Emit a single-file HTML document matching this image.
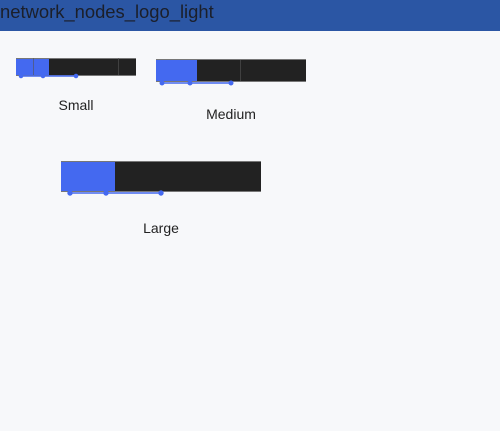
<!DOCTYPE html><html><head><style>
body{margin:0;width:500px;height:431px;background:#f7f8fa;font-family:"Liberation Sans",sans-serif;position:relative;overflow:hidden}
.h{position:absolute;left:0;top:0;width:500px;height:31px;background:#2b56a4}
.h span{position:absolute;left:0;top:1px;font-size:18.4px;color:#1b1f2a}
.b{position:absolute;background:#222;border-top:1px solid #777;border-bottom:1px solid #777;box-sizing:border-box}
.bl{position:absolute;left:0;top:0;bottom:0;background:#4469f0}
.l{position:absolute;font-size:14px;color:#222;transform:translateX(-50%)}
svg{position:absolute;left:0;top:0}
</style></head><body>
<div class="h"><span>network_nodes_logo_light</span></div>
<div class="b" style="left:16px;top:58px;width:120px;height:18px"><div class="bl" style="width:33px"></div></div>
<div class="b" style="left:156px;top:59px;width:150px;height:23px"><div class="bl" style="width:41px"></div></div>
<div class="b" style="left:61px;top:161px;width:200px;height:31px"><div class="bl" style="width:54px"></div></div>
<svg width="500" height="431" fill="#4469f0" stroke="#4469f0">
<g stroke="#555" stroke-width="1" opacity="0.6"><line x1="33.5" y1="58" x2="33.5" y2="75"/><line x1="118.5" y1="58" x2="118.5" y2="75"/><line x1="240.5" y1="60" x2="240.5" y2="81"/></g>
<line x1="21" y1="76" x2="76" y2="76" stroke-width="1.5"/><circle cx="21" cy="76" r="1.8"/><circle cx="43" cy="76" r="1.8"/><circle cx="76" cy="76" r="1.8"/>
<line x1="162" y1="83" x2="231" y2="83" stroke-width="1.5"/><circle cx="162" cy="83" r="2"/><circle cx="190" cy="83" r="2"/><circle cx="231" cy="83" r="2"/>
<line x1="70" y1="193" x2="161" y2="193" stroke-width="1.5"/><circle cx="70" cy="193" r="2.2"/><circle cx="106" cy="193" r="2.2"/><circle cx="161" cy="193" r="2.2"/>
</svg>
<div class="l" style="left:76px;top:97px">Small</div>
<div class="l" style="left:231px;top:106px">Medium</div>
<div class="l" style="left:161px;top:220px">Large</div>
</body></html>
